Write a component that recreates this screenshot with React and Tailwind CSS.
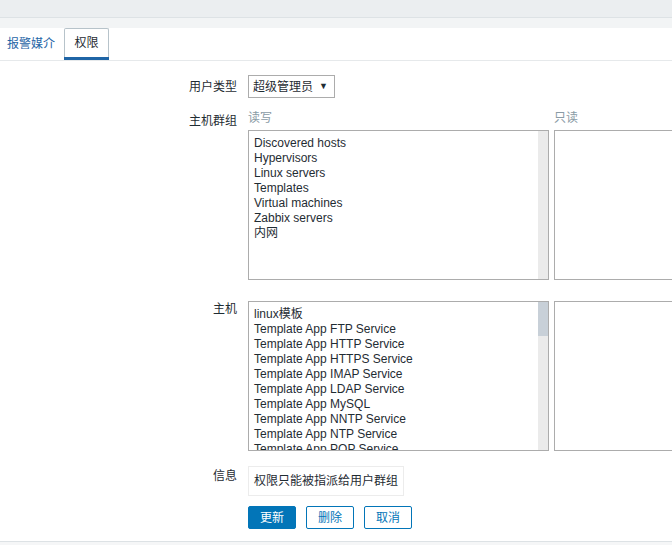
import React from "react"

const groups = [
  "Discovered hosts",
  "Hypervisors",
  "Linux servers",
  "Templates",
  "Virtual machines",
  "Zabbix servers",
  "内网",
]

const hosts = [
  "linux模板",
  "Template App FTP Service",
  "Template App HTTP Service",
  "Template App HTTPS Service",
  "Template App IMAP Service",
  "Template App LDAP Service",
  "Template App MySQL",
  "Template App NNTP Service",
  "Template App NTP Service",
  "Template App POP Service",
]

const ListBox = ({items, thumb}) => {
  return (
    <div className="flex w-[301px] h-[150px] shrink-0 border border-[#acacac] bg-white overflow-hidden">
      <div className="flex-1 pt-[5px] pl-[5px] overflow-hidden">
        {items.map(item => (
          <div key={item} className="h-[15px] leading-[15px] text-[12px] text-[#1f2c33] whitespace-nowrap">{item}</div>
        ))}
      </div>
      <div className="w-[10px] bg-[#ebebeb] flex flex-col">
        {thumb && <div className="h-[34px] bg-[#c8d0d8]"></div>}
      </div>
    </div>
  )
}

const EmptyBox = () => (
  <div className="w-[300px] h-[150px] border border-[#acacac] bg-white shrink-0"></div>
)

export default function App() {
  return (
    <div className="w-[672px] h-[545px] overflow-hidden bg-white text-[#1f2c33]" style={{fontFamily: '"Liberation Sans", Arial, "Noto Sans CJK SC", sans-serif'}}>
      <div className="h-[17px] bg-[#ebeef0]"></div>
      <div className="h-px bg-[#dde2e5]"></div>
      <div className="h-[10px] bg-[#f2f4f5]"></div>

      <div className="flex items-end h-[33px] border-b border-[#e6e9eb] pl-[7px]">
        <div className="h-[31px] leading-[31px] text-[12px] text-[#1f65a6] mr-[9px]">报警媒介</div>
        <div className="h-[32px] w-[45px] border border-b-0 border-[#b7c3ca] rounded-t-[2px] flex flex-col">
          <div className="flex-1 text-center leading-[28px] text-[12px] text-[#1f2c33]">权限</div>
          <div className="h-[3px] bg-[#1f65a6] -mx-px"></div>
        </div>
      </div>

      <div className="flex flex-col mt-[14px]">
        <div className="flex items-center">
          <div className="w-[238px] shrink-0 text-right text-[12px] pr-[1px]">用户类型</div>
          <div className="ml-[10px] w-[87px] h-[23px] border border-[#acacac] flex items-center justify-between pl-[4px] pr-[6px] text-[12px]">
            <span>超级管理员</span>
            <span className="text-[9px]">▼</span>
          </div>
        </div>

        <div className="flex mt-[12px]">
          <div className="w-[238px] shrink-0 text-right text-[12px] leading-[22px] pr-[1px]">主机群组</div>
          <div className="ml-[10px] flex flex-col shrink-0">
            <div className="flex gap-[5px] h-[20px] text-[12px] text-[#8a9ba5] leading-[16px]">
              <div className="w-[301px] shrink-0">读写</div>
              <div className="w-[300px] shrink-0">只读</div>
            </div>
            <div className="flex gap-[5px]">
              <ListBox items={groups} />
              <EmptyBox />
            </div>
          </div>
        </div>

        <div className="flex mt-[21px]">
          <div className="w-[238px] shrink-0 text-right text-[12px] leading-[16px] pr-[1px]">主机</div>
          <div className="ml-[10px] flex gap-[5px] shrink-0">
            <ListBox items={hosts} thumb />
            <EmptyBox />
          </div>
        </div>

        <div className="flex mt-[15px]">
          <div className="w-[238px] shrink-0 text-right text-[12px] leading-[20px] pr-[1px]">信息</div>
          <div className="ml-[10px] h-[30px] border border-[#ececec] flex items-center px-[5px] text-[12px]">权限只能被指派给用户群组</div>
        </div>

        <div className="flex mt-[10px] ml-[248px] gap-[10px]">
          <button className="h-[23px] w-[48px] bg-[#0275b8] border border-[#0275b8] rounded-[2px] text-white text-[12px]">更新</button>
          <button className="h-[23px] w-[48px] bg-white border border-[#0275b8] rounded-[2px] text-[#0275b8] text-[12px]">删除</button>
          <button className="h-[23px] w-[48px] bg-white border border-[#0275b8] rounded-[2px] text-[#0275b8] text-[12px]">取消</button>
        </div>

        <div className="mt-[12px] h-px bg-[#dde2e5]"></div>
        <div className="h-[10px] bg-[#f5f6f7]"></div>
      </div>
    </div>
  )
}
